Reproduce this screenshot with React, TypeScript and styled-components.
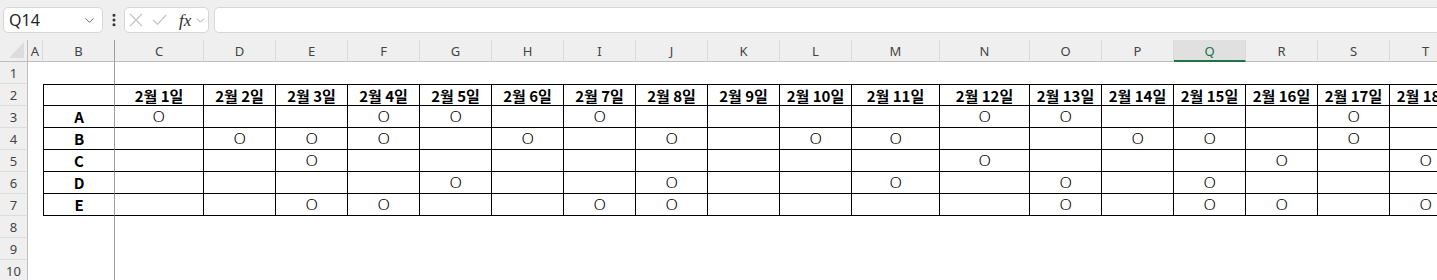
import styled, { createGlobalStyle } from 'styled-components';
import { ChevronDown, EllipsisVertical } from 'lucide-react';

const GlobalStyle = createGlobalStyle`
  html, body {
    margin: 0;
    padding: 0;
  }
  body {
    background: #ffffff;
    font-family: "Noto Sans", "Noto Sans CJK KR", sans-serif;
    overflow: hidden;
  }
  * {
    box-sizing: border-box;
  }
`;

const COLUMNS: { name: string; width: number }[] = [
  { name: 'A', width: 15 },
  { name: 'B', width: 72 },
  { name: 'C', width: 89 },
  { name: 'D', width: 72 },
  { name: 'E', width: 72 },
  { name: 'F', width: 72 },
  { name: 'G', width: 72 },
  { name: 'H', width: 72 },
  { name: 'I', width: 72 },
  { name: 'J', width: 72 },
  { name: 'K', width: 72 },
  { name: 'L', width: 72 },
  { name: 'M', width: 88 },
  { name: 'N', width: 90 },
  { name: 'O', width: 72 },
  { name: 'P', width: 72 },
  { name: 'Q', width: 72 },
  { name: 'R', width: 72 },
  { name: 'S', width: 72 },
  { name: 'T', width: 72 },
];

const MARKS: Record<string, number[]> = {
  A: [1, 4, 5, 7, 12, 13, 17],
  B: [2, 3, 4, 6, 8, 10, 11, 14, 15, 17],
  C: [3, 12, 16, 18],
  D: [5, 8, 11, 13, 15],
  E: [3, 4, 7, 8, 13, 15, 16, 18],
};

const LABELS = ['A', 'B', 'C', 'D', 'E'];
const ROWS = [1, 2, 3, 4, 5, 6, 7, 8, 9, 10];

const Window = styled.div`
  width: 1437px;
  height: 280px;
  overflow: hidden;
  background: #ffffff;
`;

const FormulaBar = styled.div`
  display: flex;
  align-items: flex-start;
  height: 40px;
  padding: 7px 0 0 3px;
  background: #efefef;
`;

const NameBox = styled.div`
  width: 100px;
  height: 26px;
  background: #ffffff;
  border: 1px solid #d6d6d6;
  border-radius: 5px;
  display: flex;
  align-items: center;
  justify-content: space-between;
  padding: 0 5px 0 5px;
  font-size: 16px;
  color: #1f1f1f;
`;

const Dots = styled.div`
  width: 21px;
  height: 26px;
  display: flex;
  align-items: center;
  justify-content: center;
  color: #333333;
`;

const FuncBox = styled.div`
  width: 85px;
  height: 26px;
  background: #ffffff;
  border: 1px solid #d6d6d6;
  border-radius: 5px;
  display: flex;
  align-items: center;
  padding: 0 0 0 4px;
  color: #c4c4c4;

  svg.cancel {
    margin-right: 9px;
  }
`;

const Fx = styled.span`
  font-family: "Liberation Serif", "DejaVu Serif", serif;
  font-style: italic;
  font-size: 17px;
  color: #2b2b2b;
  margin: 0 3px 0 12px;
  line-height: 1;
`;

const FormulaInput = styled.div`
  flex: 1;
  height: 26px;
  margin-left: 5px;
  margin-right: -8px;
  background: #ffffff;
  border: 1px solid #d6d6d6;
  border-radius: 5px;
`;

const Sheet = styled.div`
  display: grid;
  grid-template-columns: 28px ${COLUMNS.map((c) => `${c.width}px`).join(' ')};
  grid-auto-rows: 22px;
  background: #ffffff;
`;

const Corner = styled.div`
  background: #efefef;
  border-right: 1px solid #bdbdbd;
  border-bottom: 1px solid #bdbdbd;
  display: flex;
  align-items: flex-end;
  justify-content: flex-end;
  padding: 0 3px 3px 0;
`;

const ColHeader = styled.div<{ $selected?: boolean; $freeze?: boolean }>`
  background: ${(p) => (p.$selected ? '#e0e0e0' : '#efefef')};
  color: ${(p) => (p.$selected ? '#1e7145' : '#444444')};
  border-right: 1px solid ${(p) => (p.$freeze ? '#9e9e9e' : '#dadada')};
  border-bottom: ${(p) => (p.$selected ? '2px solid #217346' : '1px solid #bdbdbd')};
  font-size: 13px;
  display: flex;
  align-items: center;
  justify-content: center;
  padding-top: 1px;
  white-space: nowrap;
  overflow: hidden;
`;

const RowHeader = styled.div`
  background: #efefef;
  color: #444444;
  border-right: 1px solid #bdbdbd;
  border-bottom: 1px solid #dcdcdc;
  font-size: 13px;
  display: flex;
  align-items: center;
  justify-content: center;
`;

const Cell = styled.div<{
  $table?: boolean;
  $topEdge?: boolean;
  $leftEdge?: boolean;
  $freeze?: boolean;
  $bold?: boolean;
}>`
  display: flex;
  align-items: center;
  justify-content: center;
  white-space: nowrap;
  overflow: hidden;
  font-family: "Noto Sans CJK KR", "Noto Sans", sans-serif;
  font-size: 15px;
  line-height: 1;
  font-weight: ${(p) => (p.$bold ? 700 : 400)};
  color: #000000;
  border-top: ${(p) => (p.$topEdge ? '1px solid #000000' : 'none')};
  border-left: ${(p) => (p.$leftEdge ? '1px solid #000000' : 'none')};
  border-bottom: ${(p) => (p.$table ? '1px solid #000000' : 'none')};
  border-right: ${(p) =>
    p.$freeze ? '1px solid #9e9e9e' : p.$table ? '1px solid #000000' : 'none'};
`;

const Mark = styled.span`
  font-family: "Noto Sans", "Noto Sans CJK KR", sans-serif;
  font-size: 15px;
  font-weight: 300;
  transform: scaleX(1.08);
`;

function cellContent(row: number, colIndex: number): { text: string; bold: boolean; mark: boolean } {
  const day = colIndex - 1;
  if (row === 2 && colIndex >= 2) return { text: `2월 ${day}일`, bold: true, mark: false };
  if (row >= 3 && row <= 7) {
    const label = LABELS[row - 3];
    if (colIndex === 1) return { text: label, bold: true, mark: false };
    if (colIndex >= 2 && MARKS[label].includes(day)) return { text: 'O', bold: false, mark: true };
  }
  return { text: '', bold: false, mark: false };
}

function App() {
  return (
    <Window>
      <GlobalStyle />
      <FormulaBar>
        <NameBox>
          <span>Q14</span>
          <ChevronDown size={15} strokeWidth={1.4} color="#555" />
        </NameBox>
        <Dots>
          <EllipsisVertical size={16} strokeWidth={2.6} />
        </Dots>
        <FuncBox>
          <svg className="cancel" width="14" height="14" viewBox="0 0 14 14">
            <path d="M1 1 L13 13 M13 1 L1 13" stroke="currentColor" strokeWidth="1.2" fill="none" />
          </svg>
          <svg width="15" height="12" viewBox="0 0 15 12">
            <path d="M1 6 L5.5 10.5 L14 1" stroke="currentColor" strokeWidth="1.2" fill="none" />
          </svg>
          <Fx>fx</Fx>
          <ChevronDown size={13} strokeWidth={1.4} color="#888" />
        </FuncBox>
        <FormulaInput />
      </FormulaBar>
      <Sheet>
        <Corner>
          <svg width="15" height="16" viewBox="0 0 15 16">
            <polygon points="15,0 15,16 0,16" fill="#dcdcdc" />
          </svg>
        </Corner>
        {COLUMNS.map((c) => (
          <ColHeader key={c.name} $selected={c.name === 'Q'} $freeze={c.name === 'B'}>
            {c.name}
          </ColHeader>
        ))}
        {ROWS.map((row) => [
          <RowHeader key={`h${row}`}>{row}</RowHeader>,
          ...COLUMNS.map((c, i) => {
            const inTable = row >= 2 && row <= 7 && i >= 1;
            const { text, bold, mark } = cellContent(row, i);
            return (
              <Cell
                key={`${c.name}${row}`}
                $table={inTable}
                $topEdge={inTable && row === 2}
                $leftEdge={inTable && i === 1}
                $freeze={i === 1}
                $bold={bold}
              >
                {mark ? <Mark>{text}</Mark> : text}
              </Cell>
            );
          }),
        ])}
      </Sheet>
    </Window>
  );
}

export default App;
